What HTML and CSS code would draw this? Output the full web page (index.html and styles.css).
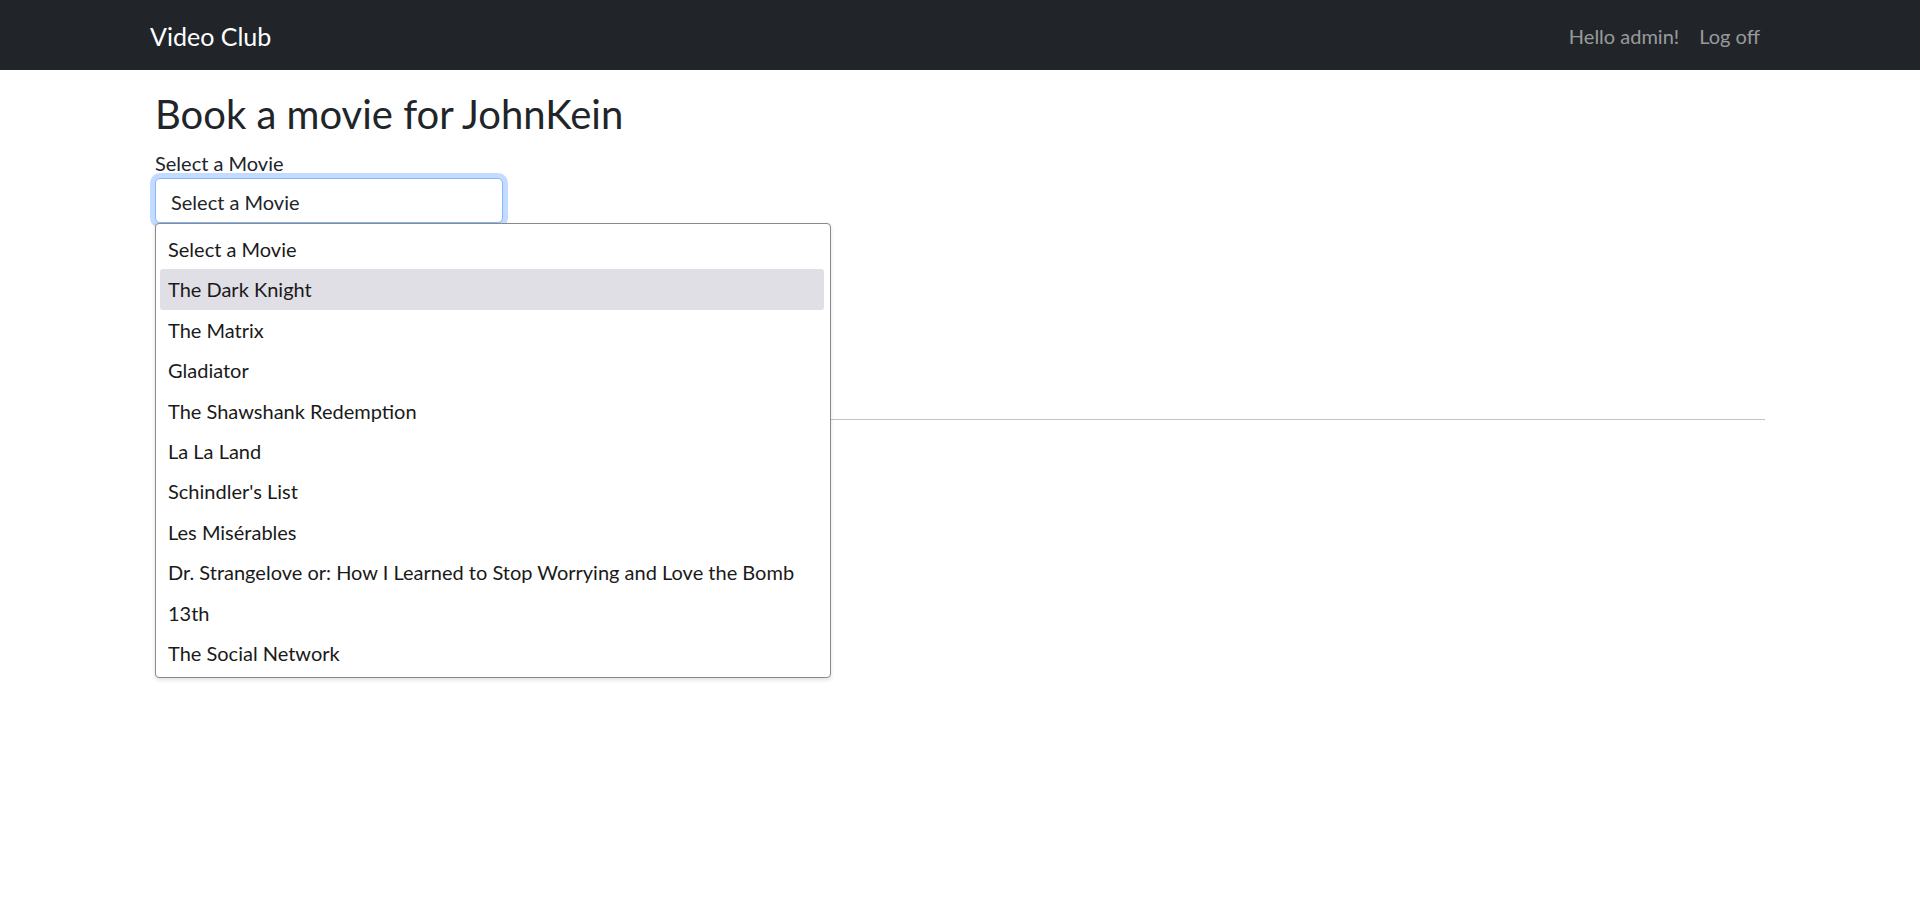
FILE: index.html
```html
<!DOCTYPE html>
<html lang="en">
<head>
<meta charset="utf-8">
<title>Book a movie - Video Club</title>
<link rel="stylesheet" href="styles.css">
</head>
<body>
<header class="navbar">
  <div class="nav-inner">
    <a class="brand" href="#">Video Club</a>
    <nav class="nav-right">
      <a class="nav-link" href="#">Hello admin!</a>
      <a class="nav-link" href="#">Log off</a>
    </nav>
  </div>
</header>
<main class="container">
  <h2 class="title">Book a movie for JohnKein</h2>
  <div class="field">
    <label class="label">Select a Movie</label>
    <div class="select-wrap">
      <div class="select">Select a Movie</div>
      <ul class="popup">
        <li class="opt">Select a Movie</li>
        <li class="opt active">The Dark Knight</li>
        <li class="opt">The Matrix</li>
        <li class="opt">Gladiator</li>
        <li class="opt">The Shawshank Redemption</li>
        <li class="opt">La La Land</li>
        <li class="opt">Schindler's List</li>
        <li class="opt">Les Misérables</li>
        <li class="opt">Dr. Strangelove or: How I Learned to Stop Worrying and Love the Bomb</li>
        <li class="opt">13th</li>
        <li class="opt">The Social Network</li>
      </ul>
    </div>
  </div>
  <div class="spacer"></div>
  <hr class="rule">
</main>
</body>
</html>
```

FILE: styles.css
```css
* { box-sizing: border-box; }
html, body { margin: 0; padding: 0; }
body {
  font-family: Lato, "Open Sans", sans-serif;
  font-size: 20px;
  line-height: 1.5;
  color: #212529;
  background: #fff;
  min-height: 917px;
}
.navbar {
  background: #212529;
  height: 70px;
}
.nav-inner {
  height: 70px;
  padding: 2px 150px 0 150px;
  display: flex;
  align-items: center;
  justify-content: space-between;
}
.brand {
  color: #fff;
  text-decoration: none;
  font-size: 25px;
  line-height: 1.5;
  padding-top: 2px;
}
.nav-right { display: flex; }
.nav-link {
  color: rgba(255,255,255,.55);
  text-decoration: none;
  padding: 0 10px;
  font-size: 20px;
}
.container {
  padding: 20px 155px 0 155px;
  min-height: 847px;
}
.title {
  margin: 0 0 10px 0;
  font-size: 40px;
  font-weight: 400;
  line-height: 1.2;
}
.label { display: block; line-height: 30px; }
.select-wrap { position: relative; width: 348px; }
.select {
  height: 45px;
  border: 1px solid #86b7fe;
  border-radius: 5px;
  box-shadow: 0 0 0 5px rgba(13,110,253,.25);
  padding: 8px 15px 4px 15px;
  line-height: 31px;
  background: #fff;
}
.popup {
  position: absolute;
  left: 0;
  top: 45px;
  width: 676px;
  margin: 0;
  list-style: none;
  background: #fff;
  border: 1px solid #8a8a8a;
  border-radius: 4px;
  box-shadow: 0 2px 4px rgba(0,0,0,.12);
  padding: 5px 6px 4px 4px;
  z-index: 10;
}
.opt {
  height: 40.4px;
  line-height: 40.4px;
  padding-left: 8px;
  border-radius: 3px;
  white-space: nowrap;
  color: #1a1a1a;
}
.opt.active { background: #e0dfe5; }
.spacer { height: 196px; }
.rule {
  margin: 0;
  border: 0;
  border-top: 1px solid #c4c4c4;
}
```
